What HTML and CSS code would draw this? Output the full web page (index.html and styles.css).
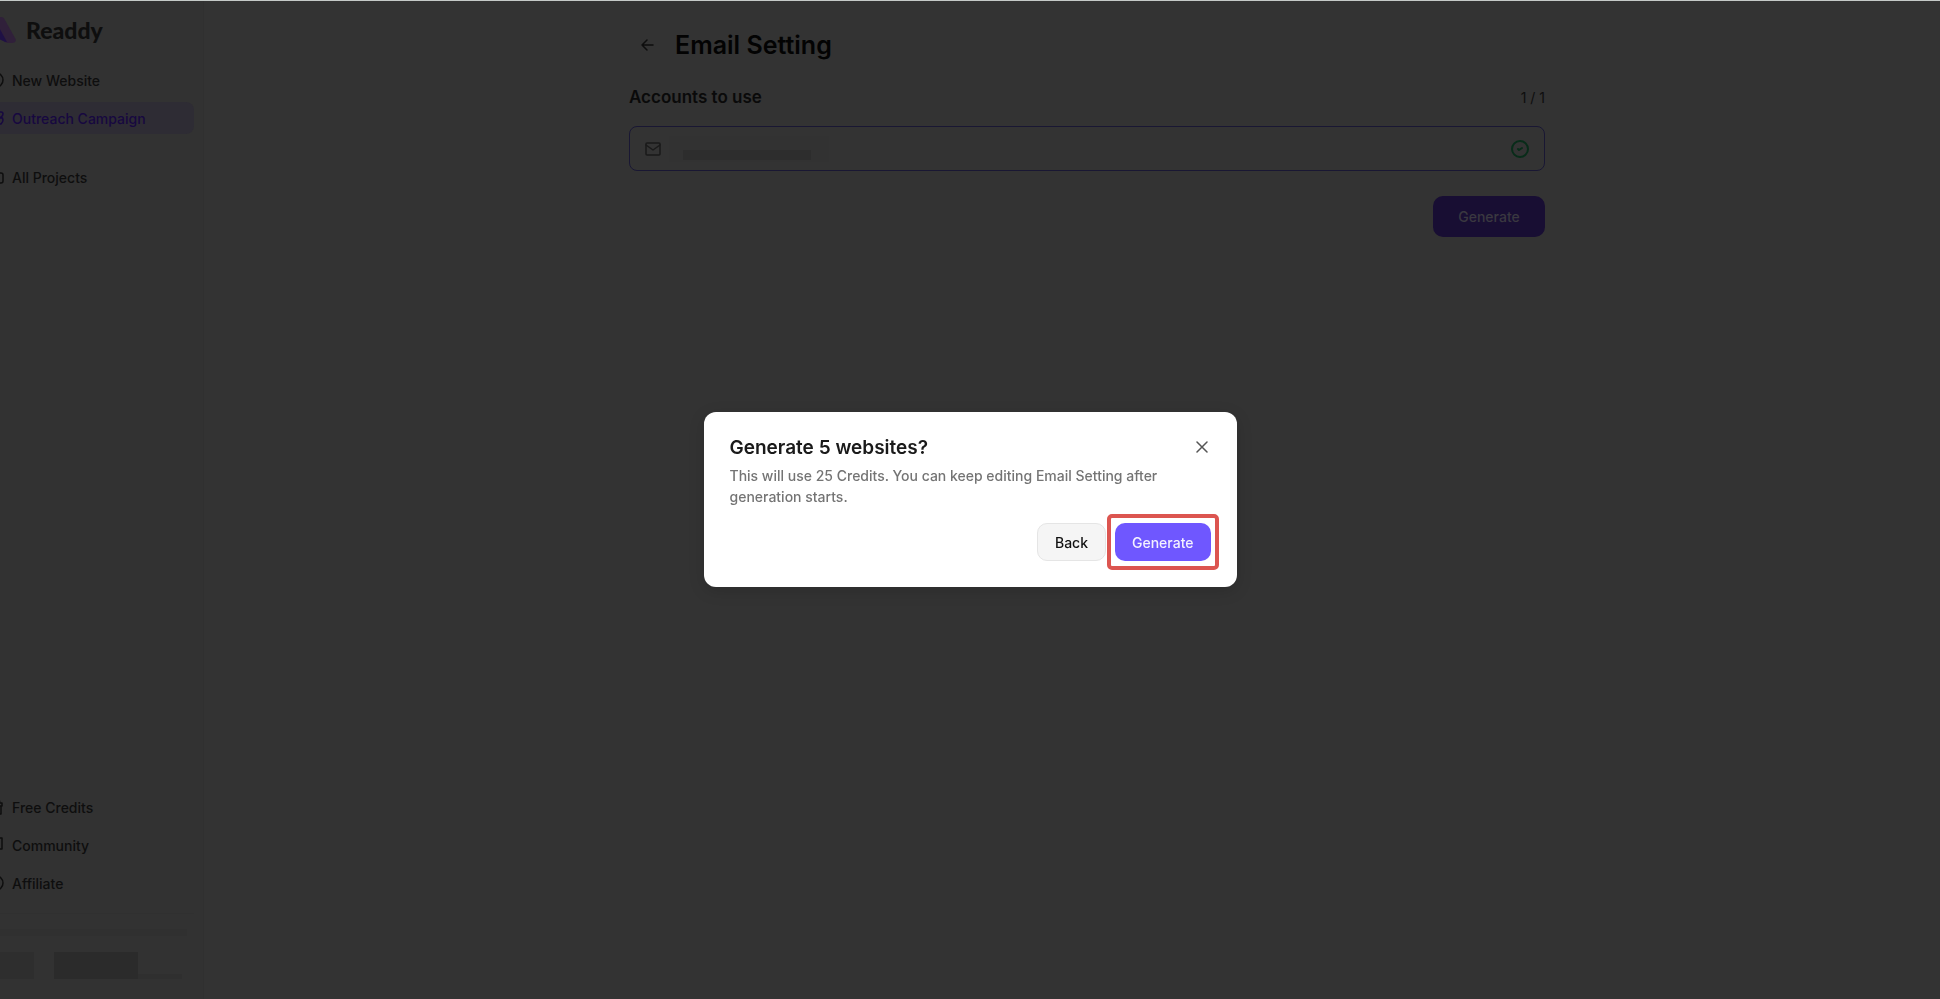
FILE: index.html
```
<!DOCTYPE html>
<html lang="en">
<head>
    <meta charset="UTF-8">
    <meta name="viewport" content="width=device-width, initial-scale=1.0">
    <title>Readdy - Email Setting</title>
    <link rel="stylesheet" href="styles.css">
</head>
<body>
    <div class="app">
        <aside class="sidebar">
            <a class="logo" href="#">
                <svg class="logo-mark" width="40" height="28" viewBox="0 0 40 28" aria-hidden="true">
                    <path d="M19 1h6c2 0 3 1 4 3l10 18c2 3 0 5-3 5h-4c-2 0-4-1-5-3L17 4z" fill="#30203a"/>
                    <path d="M2 24L19 4l12 22c-4 0-6-3-9-3l-8 3z" fill="#1f1045"/>
                </svg>
                <span>Readdy</span>
            </a>

            <nav class="nav">
                <a class="nav-item" href="#">
                    <svg class="icon" viewBox="0 0 18 18"><circle cx="9" cy="9" r="7"/><path d="M9 6v6M6 9h6"/></svg>
                    New Website
                </a>
                <a class="nav-item active" href="#">
                    <svg class="icon" viewBox="0 0 18 18"><path d="M2 3h12q2 0 2 2t-2 3q2 1 2 3t-2 4H2zM6 9h8"/></svg>
                    Outreach Campaign
                </a>
                <a class="nav-item projects" href="#">
                    <svg class="icon" viewBox="0 0 18 18"><path d="M2 3h5l2 2h5q2 0 2 2v6q0 2-2 2H2z"/></svg>
                    All Projects
                </a>
            </nav>

            <nav class="nav nav-bottom">
                <a class="nav-item" href="#">
                    <svg class="icon" viewBox="0 0 18 18"><path d="M2 8h12v8H2zM1 5h14v3H1zM8 5c3-5 6-2 4 0"/></svg>
                    Free Credits
                </a>
                <a class="nav-item" href="#">
                    <svg class="icon" viewBox="0 0 18 18"><path d="M2 2h13v11H8l-4 3v-3H2z"/></svg>
                    Community
                </a>
                <a class="nav-item" href="#">
                    <svg class="icon" viewBox="0 0 18 18"><circle cx="9" cy="9" r="7"/><path d="M6 9h6"/></svg>
                    Affiliate
                </a>
            </nav>

            <div class="user">
                <div class="user-line"></div>
                <div class="user-row">
                    <span class="user-avatar"></span>
                    <span class="user-name"></span>
                    <span class="user-plan"></span>
                </div>
            </div>
        </aside>

        <main class="main">
            <div class="content">
                <header class="page-header">
                    <button class="back-btn" aria-label="Go back">
                        <svg width="14" height="14" viewBox="0 0 14 14"><path d="M13 7H2M7 2L2 7l5 5"/></svg>
                    </button>
                    <h1>Email Setting</h1>
                </header>

                <div class="section-head">
                    <h2>Accounts to use</h2>
                    <span>1 / 1</span>
                </div>

                <div class="account">
                    <svg class="mail" width="16" height="14" viewBox="0 0 16 14"><rect x="1" y="1" width="14" height="12" rx="1"/><path d="M1 3l7 5 7-5"/></svg>
                    <span class="account-mask"><span></span></span>
                    <svg class="check" width="18" height="18" viewBox="0 0 18 18"><circle cx="9" cy="9" r="8"/><path d="M7 9l1 1 3-2"/></svg>
                </div>

                <button class="page-generate">Generate</button>
            </div>
        </main>
    </div>

    <!-- confirm dialog -->
    <div class="modal-wrap">
        <div class="modal" role="dialog" aria-modal="true" aria-labelledby="modal-title">
            <div class="modal-head">
                <h2 id="modal-title">Generate 5 websites?</h2>
                <button class="close-btn" aria-label="Close">
                    <svg width="12" height="12" viewBox="0 0 12 12"><path d="M1 1l10 10M11 1L1 11"/></svg>
                </button>
            </div>
            <p>This will use 25 Credits. You can keep editing Email Setting after generation starts.</p>
            <div class="modal-actions">
                <button class="btn btn-back">Back</button>
                <button class="btn btn-primary">Generate</button>
            </div>
        </div>
    </div>
</body>
</html>
```
FILE: styles.css
```
* {
    box-sizing: border-box;
}
body {
    margin: 0;
    background-color: #333;
    color: #0e0e0e;
    font-family: Inter, "Liberation Sans", sans-serif;
    font-size: 14px;
    overflow: hidden;
}
h1, h2, p {
    margin: 0;
}
a {
    color: inherit;
    text-decoration: none;
}
button {
    font-family: inherit;
    font-size: 14px;
    font-weight: 500;
    border: none;
    cursor: pointer;
}
svg {
    flex: none;
    fill: none;
    stroke: currentColor;
    stroke-width: 1.5;
    stroke-linecap: round;
    stroke-linejoin: round;
}
.app {
    display: flex;
    min-height: 100vh;
    border-top: 1px solid #c5cac8;
}

/* sidebar */
.sidebar {
    width: 220px;
    margin-left: -16px;
    padding: 13px 9px 20px 0;
    display: flex;
    flex-direction: column;
    background-color: #323232;
    border-right: 1px solid #303030;
}
.logo {
    display: flex;
    align-items: center;
    gap: 10px;
    height: 32px;
    margin-left: -8px;
    font-family: Lato, sans-serif;
    font-size: 23px;
    font-weight: 900;
}
.logo-mark {
    stroke: none;
}
.nav {
    display: flex;
    flex-direction: column;
    gap: 6px;
    margin-top: 18px;
}
.nav-item {
    display: flex;
    align-items: center;
    gap: 7px;
    height: 32px;
    border-radius: 8px;
    font-weight: 500;
}
.icon {
    width: 18px;
    height: 18px;
    margin-left: 3px;
}
.active {
    background-color: #2e2c34;
    color: #170840;
}
.projects {
    margin-top: 21px;
}
.nav-bottom {
    margin-top: auto;
}
.user {
    margin-top: 14px;
    padding-top: 15px;
    border-top: 1px solid #303030;
}
.user-line {
    height: 7px;
    margin-right: 7px;
    background-color: #303030;
}
.user-row {
    display: flex;
    align-items: flex-end;
    height: 27px;
    margin-top: 16px;
}
.user-avatar {
    width: 50px;
    height: 27px;
    background-color: #2e2e2e;
}
.user-name {
    width: 84px;
    height: 27px;
    margin-left: 20px;
    background-color: #2b2b2b;
}
.user-plan {
    width: 44px;
    height: 5px;
    background-color: #2f2f2f;
}

/* page */
.main {
    flex: 1;
    padding: 24px 24px 0 54px;
}
.content {
    max-width: 916px;
    margin: 0 auto;
    display: flex;
    flex-direction: column;
}
.page-header {
    display: flex;
    align-items: center;
    gap: 10px;
    height: 40px;
}
.back-btn {
    width: 36px;
    height: 36px;
    padding: 0;
    background: none;
    color: #0e0e0e;
    display: flex;
    align-items: center;
    justify-content: center;
}
h1 {
    font-size: 25px;
    font-weight: 600;
    color: #030303;
}
.section-head {
    display: flex;
    align-items: center;
    justify-content: space-between;
    height: 24px;
    margin-top: 20px;
}
.section-head h2 {
    font-size: 17px;
    font-weight: 600;
    color: #0a0a0a;
}
.account {
    display: flex;
    align-items: center;
    height: 45px;
    margin-top: 17px;
    padding: 0 15px;
    border: 1px solid #191733;
    border-radius: 8px;
}
.mail {
    color: #1a1a1a;
}
.account-mask {
    width: 160px;
    height: 26px;
    padding: 14px 18px 0 14px;
    margin-left: 8px;
    background-color: #323232;
}
.account-mask span {
    display: block;
    height: 10px;
    background-color: #2d2d2d;
}
.check {
    margin-left: auto;
    color: #082c19;
    stroke-width: 2;
}
.page-generate {
    align-self: flex-end;
    width: 112px;
    height: 41px;
    margin-top: 25px;
    border-radius: 10px;
    background-color: #180e33;
    color: #3a3840;
}

/* modal */
.modal-wrap {
    position: fixed;
    inset: 0;
    display: flex;
    align-items: center;
    justify-content: center;
}
.modal {
    width: 533px;
    padding: 22px 26px 26px;
    border-radius: 12px;
    background-color: #fff;
    box-shadow: 0 4px 16px rgba(0, 0, 0, 0.15);
}
.modal-head {
    display: flex;
    align-items: center;
    justify-content: space-between;
    height: 26px;
}
.modal-head h2 {
    font-size: 19px;
    font-weight: 600;
    color: #1a1a1a;
}
.close-btn {
    width: 18px;
    height: 18px;
    padding: 0;
    background: none;
    color: #555;
    display: flex;
    align-items: center;
    justify-content: center;
}
.modal p {
    margin-top: 5px;
    font-weight: 500;
    line-height: 21px;
    color: #747474;
}
.modal-actions {
    display: flex;
    justify-content: flex-end;
    gap: 9px;
    margin-top: 16px;
}
.btn {
    height: 38px;
    padding: 0 17px;
    border-radius: 10px;
}
.btn-back {
    background-color: #f5f5f5;
    border: 1px solid #e5e5e5;
    color: #111;
}
.btn-primary {
    position: relative;
    background-color: #6f57ff;
    color: #f4f1ff;
}
/* red highlight around the confirm button */
.btn-primary::after {
    content: "";
    position: absolute;
    inset: -9px -8px;
    border: 4px solid #dc5550;
    border-radius: 5px;
}
```
